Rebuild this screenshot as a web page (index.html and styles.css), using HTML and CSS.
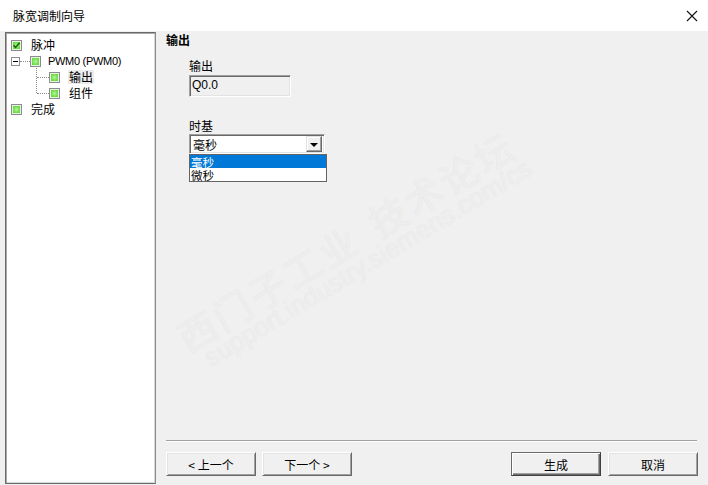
FILE: index.html
```html
<!DOCTYPE html>
<html lang="zh-CN">
<head>
<meta charset="utf-8">
<title>脉宽调制向导</title>
<link rel="stylesheet" href="styles.css">
</head>
<body>
<div class="window">
  <div class="titlebar">
    <span class="title">脉宽调制向导</span>
    <svg class="close" width="12" height="12" viewBox="0 0 12 12"><path d="M1 1 L11 11 M11 1 L1 11" stroke="#111" stroke-width="1.1" fill="none"/></svg>
  </div>
  <div class="content">
    <div class="tree">
      <div class="row lvl0">
        <span class="cb checked"><svg width="9" height="9" viewBox="0 0 9 9"><path d="M1.5 4.2 L3.6 6.4 L7.6 1.8" stroke="#17650a" stroke-width="1.6" fill="none"/></svg></span>
        <span class="label">脉冲</span>
      </div>
      <div class="row lvl1">
        <span class="expander"><span class="minus"></span></span>
        <span class="hline h1"></span>
        <span class="cb"></span>
        <span class="label latin">PWM0 (PWM0)</span>
      </div>
      <div class="group">
        <div class="vline"></div>
        <div class="children">
          <div class="row">
            <span class="hline h2"></span>
            <span class="cb"></span>
            <span class="label selected">输出</span>
          </div>
          <div class="row">
            <span class="hline h2"></span>
            <span class="cb"></span>
            <span class="label">组件</span>
          </div>
        </div>
      </div>
      <div class="row lvl0">
        <span class="cb"></span>
        <span class="label">完成</span>
      </div>
    </div>
    <div class="panel">
      <div class="heading">输出</div>
      <div class="form">
        <div class="field-label">输出</div>
        <div class="textbox">Q0.0</div>
        <div class="field-label timebase">时基</div>
        <div class="combo">
          <span class="combo-value">毫秒</span>
          <span class="combo-btn"><span class="tri"></span></span>
        </div>
        <ul class="dropdown">
          <li class="opt active">毫秒</li>
          <li class="opt">微秒</li>
        </ul>
      </div>
      <div class="separator"></div>
      <div class="buttons">
        <button class="btn">&lt; 上一个</button>
        <button class="btn">下一个 &gt;</button>
        <span class="fill"></span>
        <button class="btn default">生成</button>
        <button class="btn">取消</button>
      </div>
    </div>
  </div>
  <div class="watermark">
    <div class="wm-cn">西门子工业<span class="wm-gap"></span>技术论坛</div>
    <div class="wm-url">support.industry.siemens.com/cs</div>
  </div>
</div>
</body>
</html>
```
FILE: styles.css
```css
* { box-sizing: border-box; }
html, body { margin: 0; padding: 0; }
body {
  width: 708px;
  height: 485px;
  overflow: hidden;
  background: #f0f0f0;
  font-family: "Noto Sans CJK SC", "Liberation Sans", sans-serif;
  font-size: 12px;
  color: #000;
}
.window {
  position: relative;
  width: 708px;
  height: 485px;
  display: flex;
  flex-direction: column;
}
.titlebar {
  height: 31px;
  background: #fff;
  display: flex;
  align-items: center;
  padding: 0 10px 0 13px;
  flex: none;
}
.title {
  font-size: 12px;
  color: #000;
  flex: 1;
  margin-top: -1px;
}
.content {
  flex: 1;
  display: flex;
  padding-left: 5px;
}
.tree {
  width: 151px;
  margin-top: 1px;
  margin-bottom: 1px;
  background: #fff;
  border: 1px solid #8a8a8a;
  border-top-color: #6a6a6a;
  border-left-color: #6a6a6a;
  border-bottom-color: #6a6a6a;
  box-shadow: inset 1px 1px 0 #a8a8a8, inset -1px -1px 0 #d8d8d8;
  padding: 4px 0 0 5px;
  flex: none;
}
.row {
  height: 16px;
  display: flex;
  align-items: center;
}
.cb {
  width: 11px;
  height: 11px;
  flex: none;
  border: 1px solid #8c8c8c;
  background: radial-gradient(circle at 50% 50%, #b2f59c 0%, #78e052 45%, #46cc20 100%);
  box-shadow: inset 0 0 0 1px #e9f5e4;
  display: flex;
  align-items: center;
  justify-content: center;
}
.label {
  margin-left: 8px;
  line-height: 14px;
  padding: 0 1px;
  white-space: nowrap;
}
.latin {
  font-family: "Liberation Sans", sans-serif;
  font-size: 11px;
  margin-left: 6px;
  letter-spacing: -0.3px;
  color: #000;
}
.selected { background: #ececec; }
.expander {
  width: 9px;
  height: 9px;
  border: 1px solid #8f8f8f;
  background: #fff;
  display: flex;
  align-items: center;
  justify-content: center;
  flex: none;
}
.minus { width: 5px; height: 1px; background: #000; }
.hline { border-top: 1px dotted #8c8c8c; height: 0; flex: none; }
.h1 { width: 10px; }
.h2 { width: 12px; }
.group { display: flex; padding-left: 25px; }
.vline {
  width: 1px;
  height: 27px;
  margin-top: -3px;
  border-left: 1px dotted #8c8c8c;
  flex: none;
}
.children { display: flex; flex-direction: column; }
.panel {
  width: 532px;
  margin-left: 10px;
  display: flex;
  flex-direction: column;
}
.heading {
  font-weight: bold;
  line-height: 16px;
  margin-top: 1px;
}
.form {
  flex: 1;
  padding-left: 23px;
}
.field-label {
  line-height: 16px;
  margin-top: 10px;
}
.timebase { margin-top: 21px; }
.textbox {
  width: 102px;
  height: 22px;
  margin-top: 1px;
  background: #f0f0f0;
  border: 1px solid;
  border-color: #a0a0a0 #fff #fff #a0a0a0;
  box-shadow: inset 1px 1px 0 #696969, inset -1px -1px 0 #e3e3e3;
  font-family: "Liberation Sans", sans-serif;
  font-size: 12px;
  line-height: 18px;
  padding-left: 2px;
}
.combo {
  width: 136px;
  height: 20px;
  background: #fff;
  border: 1px solid;
  border-color: #a0a0a0 #fff #fff #a0a0a0;
  box-shadow: inset 1px 1px 0 #696969, inset -1px -1px 0 #e3e3e3;
  display: flex;
  align-items: center;
  padding: 2px 2px 2px 3px;
}
.combo-value { flex: 1; line-height: 15px; }
.combo-btn {
  width: 16px;
  height: 16px;
  background: #f0f0f0;
  border: 1px solid;
  border-color: #e3e3e3 #696969 #696969 #e3e3e3;
  box-shadow: inset -1px -1px 0 #a0a0a0, inset 1px 1px 0 #fff;
  display: flex;
  align-items: center;
  justify-content: center;
}
.tri {
  width: 0;
  height: 0;
  border-left: 4px solid transparent;
  border-right: 4px solid transparent;
  border-top: 4px solid #000;
  margin-top: 1px;
}
.dropdown {
  list-style: none;
  margin: 0;
  padding: 0;
  width: 138px;
  border: 1px solid #646464;
  background: #fff;
}
.opt {
  height: 13px;
  display: flex;
  align-items: center;
  padding-left: 1px;
  font-size: 11.5px;
  line-height: 12px;
}
.opt.active { background: #0078d7; color: #fff; }
.separator {
  height: 2px;
  border-top: 1px solid #a0a0a0;
  border-bottom: 1px solid #fff;
  margin-right: 1px;
}
.buttons {
  display: flex;
  margin-top: 10px;
  margin-bottom: 9px;
}
.fill { flex: 1; }
.btn {
  width: 90px;
  height: 24px;
  margin: 0 6px 0 0;
  padding: 0;
  background: #f0f0f0;
  border: 1px solid;
  border-color: #fff #696969 #696969 #fff;
  box-shadow: inset 1px 1px 0 #e3e3e3, inset -1px -1px 0 #a0a0a0;
  font-family: "Noto Sans CJK SC", "Liberation Sans", sans-serif;
  font-size: 12px;
  color: #000;
}
.btn:last-child { margin-right: 0; }
.btn.default {
  margin-right: 7px;
  border-color: #696969 #404040 #404040 #696969;
  box-shadow: inset 1px 1px 0 #fff, inset -1px -1px 0 #696969, inset -2px -2px 0 #a0a0a0;
}
.watermark {
  position: absolute;
  left: 352px;
  top: 250px;
  transform: translate(-50%, -50%) rotate(-31deg);
  white-space: nowrap;
  text-align: center;
  pointer-events: none;
  color: rgba(255, 255, 255, 0.6);
  text-shadow: 0 0 1px rgba(0, 0, 0, 0.12);
}
.wm-cn {
  font-family: "Noto Sans CJK SC", sans-serif;
  font-size: 38px;
  line-height: 38px;
  letter-spacing: 3px;
}
.wm-gap { display: inline-block; width: 18px; }
.wm-url {
  font-family: "Liberation Sans", sans-serif;
  font-size: 26px;
  line-height: 22px;
  margin-left: 14px;
}
```
